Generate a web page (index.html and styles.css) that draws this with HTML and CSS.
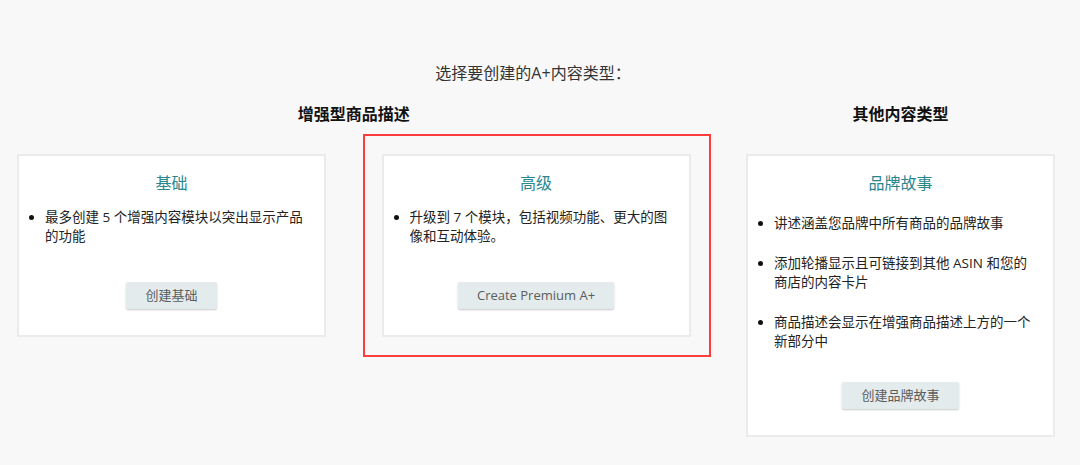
FILE: index.html
```html
<!DOCTYPE html>
<html lang="zh-CN">
<head>
<meta charset="utf-8">
<title>A+ 内容类型</title>
<link rel="stylesheet" href="styles.css">
</head>
<body>
<main class="page">
  <h1 class="prompt">选择要创建的A+内容类型：</h1>
  <div class="grid">
    <h2 class="group group-ebc">增强型商品描述</h2>
    <h2 class="group group-other">其他内容类型</h2>

    <section class="card">
      <h3 class="card-title">基础</h3>
      <ul class="bullets">
        <li>最多创建 5 个增强内容模块以突出显示产品的功能</li>
      </ul>
      <div class="actions"><button class="btn" type="button">创建基础</button></div>
    </section>

    <section class="card card-marked">
      <h3 class="card-title">高级</h3>
      <ul class="bullets">
        <li>升级到 7 个模块，包括视频功能、更大的图像和互动体验。</li>
      </ul>
      <div class="actions"><button class="btn" type="button">Create Premium A+</button></div>
    </section>

    <section class="card">
      <h3 class="card-title">品牌故事</h3>
      <ul class="bullets bullets-spaced">
        <li>讲述涵盖您品牌中所有商品的品牌故事</li>
        <li>添加轮播显示且可链接到其他 ASIN 和您的商店的内容卡片</li>
        <li>商品描述会显示在增强商品描述上方的一个新部分中</li>
      </ul>
      <div class="actions actions-tight"><button class="btn" type="button">创建品牌故事</button></div>
    </section>
  </div>
</main>
</body>
</html>
```

FILE: styles.css
```css
* { box-sizing: border-box; }

html, body {
  margin: 0;
  padding: 0;
  background: #f8f8f8;
}

body {
  font-family: "Open Sans", "Noto Sans CJK SC", sans-serif;
  color: #333;
}

.page {
  width: 1055px;
  padding: 61px 0 0 17px;
}

.prompt {
  margin: 0;
  padding-right: 6px;
  font-size: 16px;
  line-height: 24px;
  font-weight: 400;
  color: #333;
  text-align: center;
}

.grid {
  display: grid;
  grid-template-columns: 309px 309px 309px;
  column-gap: 55.5px;
  row-gap: 28px;
  margin-top: 17px;
  align-items: start;
}

.group {
  margin: 0;
  font-size: 16px;
  line-height: 24px;
  font-weight: 700;
  color: #111;
  text-align: center;
}

.group-ebc { grid-column: 1 / 3; }
.group-other { grid-column: 3; }

.card {
  background: #fff;
  border: 2px solid #ebebeb;
  padding: 15px 10px 26px 10px;
}

.card-marked {
  position: relative;
}

.card-marked::after {
  content: "";
  position: absolute;
  top: -22px;
  left: -21px;
  right: -22px;
  bottom: -22px;
  border: 2px solid #ff3d3d;
  pointer-events: none;
}

.card-title {
  margin: 0;
  font-size: 16px;
  line-height: 24px;
  font-weight: 400;
  color: #2a868e;
  text-align: center;
}

.bullets {
  list-style: none;
  margin: 12.5px 0 0 0;
  padding: 0 7px 0 0;
  font-size: 13.5px;
  line-height: 19px;
  color: #222;
}

.bullets li {
  display: grid;
  grid-template-columns: 16px 1fr;
}

.bullets li::before {
  content: "";
  width: 5px;
  height: 5px;
  margin: 7px 0 0 0;
  border-radius: 50%;
  background: #111;
}

.bullets-spaced {
  margin-top: 19px;
}

.bullets-spaced li + li {
  margin-top: 21px;
}

.actions {
  margin-top: 36.5px;
  display: flex;
  justify-content: center;
}

.actions-tight {
  margin-top: 31px;
}

.btn {
  height: 27px;
  padding: 0 19px;
  border: 0;
  border-radius: 2px;
  background: #e3ebec;
  box-shadow: 0 1px 2px rgba(0, 0, 0, 0.22);
  font-family: "Open Sans", "Noto Sans CJK SC", sans-serif;
  font-size: 13px;
  line-height: 27px;
  color: #5a5d5d;
  cursor: pointer;
}
```
